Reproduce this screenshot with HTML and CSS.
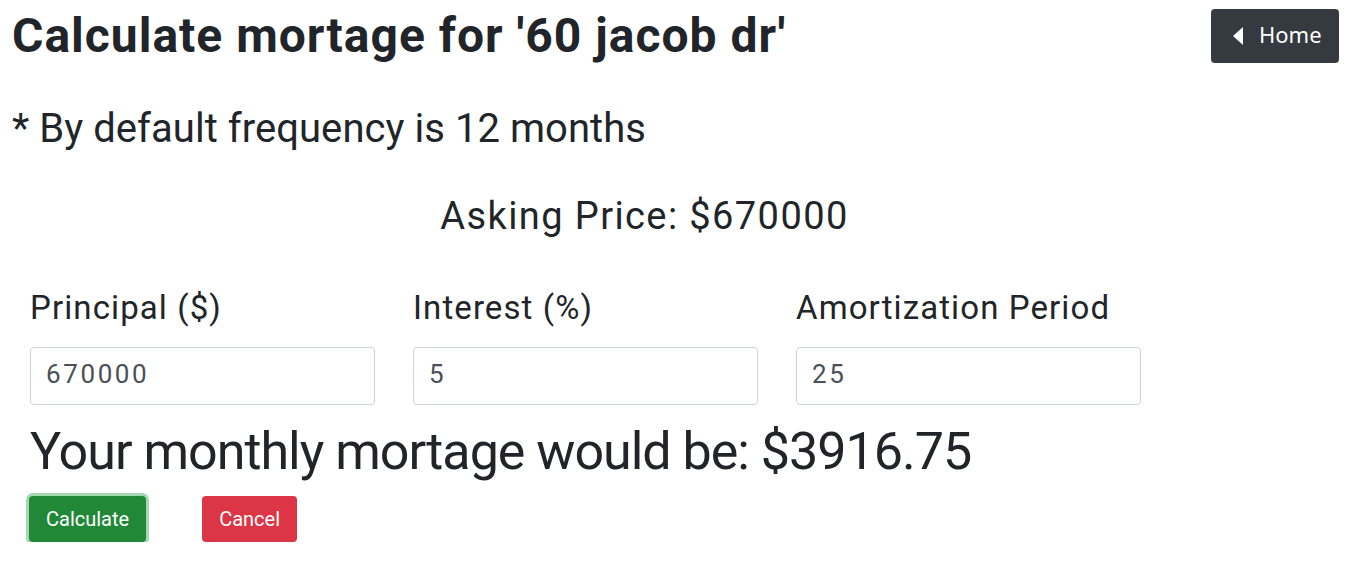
FILE: index.html
```html
<!DOCTYPE html>
<html lang="en">
<head>
<meta charset="utf-8">
<title>Calculate mortage</title>
<link rel="stylesheet" href="styles.css">
</head>
<body>
  <header class="top">
    <h1 class="title">Calculate mortage for '60 jacob dr'</h1>
    <a class="btn-home" href="#">
      <svg class="caret" width="10" height="18" viewBox="0 0 10 18"><path d="M10 0 L0 9 L10 18 Z" fill="#fff"/></svg>
      <span>Home</span>
    </a>
  </header>
  <p class="note">* By default frequency is 12 months</p>
  <div class="price">Asking Price: $670000</div>
  <form class="form">
    <div class="fields">
      <div class="field">
        <label class="label">Principal ($)</label>
        <input class="input" type="text" value="670000">
      </div>
      <div class="field">
        <label class="label">Interest (%)</label>
        <input class="input" type="text" value="5">
      </div>
      <div class="field">
        <label class="label">Amortization Period</label>
        <input class="input" type="text" value="25">
      </div>
    </div>
    <div class="result">Your monthly mortage would be: $3916.75</div>
    <div class="actions">
      <button type="button" class="btn btn-success">Calculate</button>
      <button type="button" class="btn btn-danger">Cancel</button>
    </div>
  </form>
</body>
</html>
```
FILE: styles.css
```css
* { box-sizing: border-box; }
body {
  margin: 0;
  padding: 0 13px 0 12px;
  font-family: Roboto, "Noto Sans", sans-serif;
  color: #212529;
  background: #fff;
}
.top {
  display: flex;
  justify-content: space-between;
  align-items: flex-start;
}
.title {
  margin: 8px 0 0;
  font-size: 48px;
  line-height: 56px;
  font-weight: 700;
  letter-spacing: 1px;
}
.btn-home {
  margin-top: 9px;
  display: flex;
  align-items: center;
  height: 54px;
  width: 128px;
  padding: 0 0 5px 22px;
  gap: 16px;
  background: #343a40;
  color: #fff;
  border-radius: 4px;
  text-decoration: none;
  font-family: "Noto Sans", "DejaVu Sans", sans-serif;
  font-size: 22px;
}
.caret { display: block; flex: none; margin-top: 4px; }
.note {
  margin: 41px 0 0;
  font-size: 40px;
  line-height: 48px;
  font-weight: 400;
  letter-spacing: 0.05px;
}
.price {
  margin-top: 41px;
  padding-right: 62px;
  text-align: center;
  font-size: 38px;
  line-height: 44px;
  letter-spacing: 1.4px;
}
.form {
  margin: 0;
  padding-left: 18px;
}
.fields {
  display: flex;
  gap: 38px;
  margin-top: 50px;
}
.field {
  width: 345px;
  display: flex;
  flex-direction: column;
}
.label {
  font-size: 33px;
  line-height: 40px;
  margin-bottom: 19px;
  letter-spacing: 1.1px;
}
.input {
  height: 58px;
  width: 100%;
  border: 1px solid #ced4da;
  border-radius: 4px;
  padding: 0 15px 5px;
  font-family: Roboto, "Noto Sans", sans-serif;
  font-size: 26px;
  letter-spacing: 2.6px;
  color: #495057;
  background: #fff;
}
.result {
  margin-top: 16px;
  font-size: 52px;
  line-height: 62px;
  letter-spacing: -1px;
}
.actions {
  display: flex;
  gap: 56px;
  margin-top: 13px;
  margin-left: -1px;
}
.btn {
  height: 46px;
  padding: 0 17px;
  border: 0;
  border-radius: 4px;
  color: #fff;
  font-family: Roboto, "Noto Sans", sans-serif;
  font-size: 20px;
  line-height: 46px;
}
.btn-success {
  background: #218838;
  box-shadow: 0 0 0 3px #a3d9b1;
}
.btn-danger {
  background: #dc3545;
}
```
